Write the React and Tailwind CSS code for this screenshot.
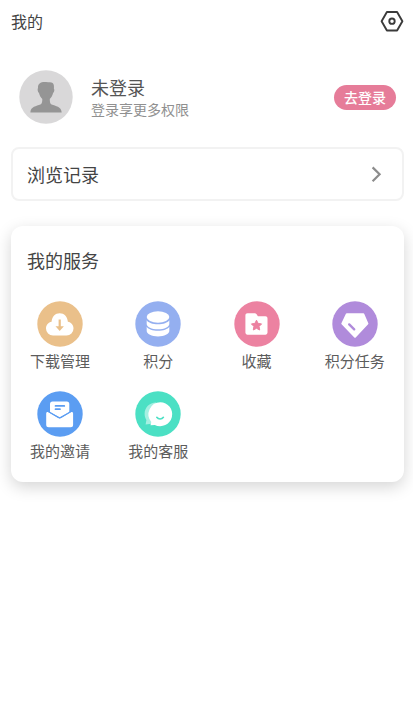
const services = [
  { label: '下载管理', Icon: DownloadIcon },
  { label: '积分', Icon: CoinsIcon },
  { label: '收藏', Icon: FavoriteIcon },
  { label: '积分任务', Icon: GemIcon },
  { label: '我的邀请', Icon: InviteIcon },
  { label: '我的客服', Icon: SupportIcon },
]

function Badge({ color, children }) {
  return (
    <svg viewBox="0 0 46 46" className="size-[46px]" fill="none" aria-hidden="true">
      <circle cx="23" cy="23" r="22.7" fill={color} />
      {children}
    </svg>
  )
}

function DownloadIcon() {
  return (
    <Badge color="#eac08a">
      <path
        d="M16 34.5a7 7 0 0 1-7-7c0-3.6 2.4-6.2 5.6-6.8C15 15.6 18.3 12.2 22.7 12.2s7.700 3.400 8.200 8.500c3.200.6 5.600 3.200 5.600 6.800a7 7 0 0 1-7 7z"
        fill="#fff"
      />
      <path d="M22.7 18.5v9" stroke="#eac08a" strokeWidth="2.2" />
      <path d="M18.5 25.3h8.400l-4.200 4.700z" fill="#eac08a" />
    </Badge>
  )
}

function CoinsIcon() {
  return (
    <Badge color="#94aff0">
      <ellipse cx="23" cy="16" rx="11.3" ry="5.7" fill="#fff" />
      <path d="M11.7 19.2c1.600 2.500 6 4 11.300 4s9.700-1.500 11.300-4v3.700c0 3-5 5.400-11.300 5.400s-11.300-2.400-11.300-5.400z" fill="#fff" />
      <path d="M11.7 25.800c1.600 2.500 6 4 11.300 4s9.700-1.500 11.300-4v4.200c0 3-5 5.400-11.300 5.400s-11.300-2.400-11.300-5.400z" fill="#fff" />
    </Badge>
  )
}

function FavoriteIcon() {
  return (
    <Badge color="#ec82a1">
      <path
        d="M13.5 12.3h7.300c.7 0 1.200.3 1.600.8l1.500 2.200h7.500c1.200 0 2.100.9 2.100 2.100v14.200c0 1.200-.9 2.100-2.100 2.100H13.500c-1.200 0-2.100-.9-2.100-2.100V14.400c0-1.200.9-2.100 2.100-2.100z"
        fill="#fff"
      />
      <path
        d="M22.5 19.2l1.600 3.200 3.500.5-2.500 2.500.6 3.600-3.200-1.700-3.200 1.700.6-3.600-2.500-2.500 3.500-.5z"
        fill="#ec82a1"
        stroke="#ec82a1"
        strokeLinejoin="round"
      />
    </Badge>
  )
}

function GemIcon() {
  return (
    <Badge color="#b08bdb">
      <path
        d="M14.8 13.3h16.600l4 9.300L23 35.700 10.300 22.600z"
        fill="#fff"
        stroke="#fff"
        strokeWidth="2"
        strokeLinejoin="round"
      />
      <path d="M17.2 23.4l5 4.900" stroke="#b08bdb" strokeWidth="2.4" strokeLinecap="round" />
    </Badge>
  )
}

function InviteIcon() {
  return (
    <Badge color="#5b9df2">
      <path d="M13 13a2.500 2.500 0 0 1 2.500-2.500h14.300a2.500 2.500 0 0 1 2.500 2.500v8.300L22.700 26.200 13 21.300z" fill="#fff" />
      <path d="M18.5 14.900h8.800M18.500 18.200h4.500" stroke="#5b9df2" strokeWidth="1.7" strokeLinecap="round" />
      <path
        d="M9.2 22.500c0-1.500 1.100-2 2.200-1.300l10 5.900c.8.500 1.700.5 2.500 0l10-5.900c1.100-.7 2.200-.2 2.200 1.300v11.300a2.500 2.500 0 0 1-2.500 2.500H11.700a2.500 2.500 0 0 1-2.500-2.500z"
        fill="#fff"
      />
      <path d="M11 20.300l10.400 6.300c.8.500 1.700.5 2.500 0l10.400-6.300" stroke="#5b9df2" strokeWidth="1.2" />
    </Badge>
  )
}

function SupportIcon() {
  return (
    <Badge color="#4be0c4">
      <path
        d="M21 11.6c-6.500 0-11.400 5-11.400 11.300 0 2.400.8 4.500 1.800 6.200L10.600 33.600l5.800-.8c1.500.6 3 .9 4.600.9z"
        fill="#fff"
        fillOpacity=".5"
      />
      <path
        d="M25.3 11.2a12 12 0 1 1-5.500 22.700l-4.300.4.800-3.400a12 12 0 0 1 9-19.700z"
        fill="#fff"
      />
      <path d="M21.8 26.3c1.600 2.200 5 2.200 6.600 0" stroke="#4be0c4" strokeWidth="1.6" strokeLinecap="round" />
    </Badge>
  )
}

function SettingsIcon() {
  return (
    <svg viewBox="0 0 24 24" className="size-6" fill="none" stroke="#3b3b3b" aria-hidden="true">
      <path d="M6.9 3h10.200L22.400 12.300 17.100 21.500H6.900L1.600 12.300z" strokeWidth="1.9" strokeLinejoin="round" />
      <circle cx="12" cy="12.2" r="2.7" strokeWidth="1.9" />
    </svg>
  )
}

function Avatar() {
  return (
    <svg viewBox="0 0 54 54" className="size-[54px] shrink-0" role="img" aria-label="头像">
      <circle cx="27" cy="27" r="26.7" fill="#d9d8d9" />
      <path
        d="M19 18c-.3-4.500 3-6.400 8-6 3 .3 5.300.2 6.600 1 1.400 1 1.500 3.200 1.300 5.800.8.500.5 3.300-.8 4.200-.6 2.700-1.800 4.500-3.300 5.900 0 2.900.2 4.500 1.800 5.600 4 1.700 9.700 2 10 7.500v.6H11.400V42c.3-5.500 6-5.800 10-7.500 1.600-1.100 1.900-2.700 1.900-5.600-1.500-1.400-2.700-3.200-3.300-5.900-1.400-.9-1.700-4.200-1-5z"
        fill="#959595"
      />
    </svg>
  )
}

export default function App() {
  return (
    <main className="min-h-screen bg-white pr-[9px] pb-8 pl-[11px] font-['Noto_Sans_CJK_SC',sans-serif] text-[#444]">
      <header className="flex h-[42px] items-center justify-between">
        <h1 className="text-base">我的</h1>
        <button type="button" aria-label="设置">
          <SettingsIcon />
        </button>
      </header>

      <section className="mt-7 flex items-center px-2">
        <Avatar />
        <div className="ml-[18px] flex-1">
          <p className="text-lg leading-6 text-[#555]">未登录</p>
          <p className="text-sm leading-5 text-[#909090]">登录享更多权限</p>
        </div>
        <button
          type="button"
          className="h-[25px] rounded-full bg-[#e67c99] px-[10px] text-sm leading-[25px] font-medium text-white"
        >
          去登录
        </button>
      </section>

      <button
        type="button"
        className="mt-[23px] flex h-[54px] w-full items-center justify-between rounded-lg border-2 border-[#f2f2f2] px-[14px] text-lg"
      >
        浏览记录
        <svg viewBox="0 0 24 24" className="size-6" fill="none" stroke="#8c8c8c" strokeWidth="2.2" aria-hidden="true">
          <path d="M8.6 5.400l7 6.900-7 6.900" />
        </svg>
      </button>

      <section className="mt-[25px] rounded-xl pt-5 pb-[19px] shadow-[0_5px_16px_rgba(0,0,0,0.17)]">
        <h2 className="px-4 text-lg leading-7">我的服务</h2>
        <div className="mt-[27px] grid grid-cols-4 gap-y-[18px]">
          {services.map(({ label, Icon }) => (
            <button
              key={label}
              type="button"
              className="flex flex-col items-center gap-0.5 text-[15px] leading-6 text-[#5c5c5c]"
            >
              <Icon />
              {label}
            </button>
          ))}
        </div>
      </section>
    </main>
  )
}
